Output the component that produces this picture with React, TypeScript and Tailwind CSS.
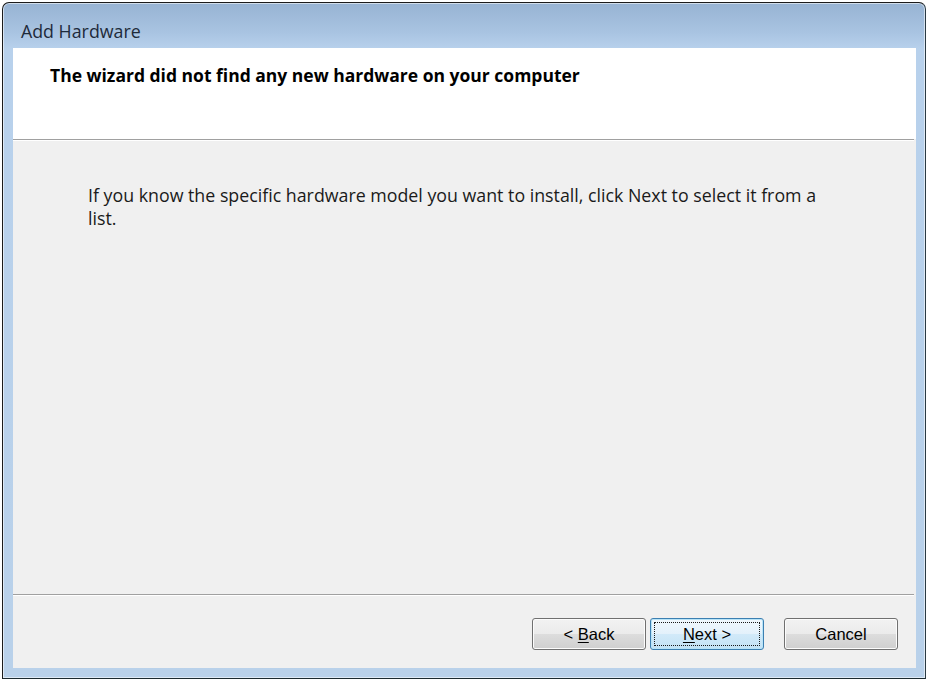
import React from 'react';

const sans = { fontFamily: '"Open Sans", "Noto Sans", sans-serif' };

const WizardButton = ({ children, focused = false }: { children: React.ReactNode; focused?: boolean }) => (
    <button
        className={`relative w-[114px] h-[32px] rounded-[3px] border text-[16.5px] text-black font-['Liberation_Sans',Arial,sans-serif] ${focused
            ? 'border-[#3c7fb1] bg-[linear-gradient(#f1f8fd_0%,#e3f1fb_50%,#d2eaf9_50%,#c3e2f5_100%)] shadow-[inset_0_0_0_1px_#b8e4f8]'
            : 'border-[#707070] bg-[linear-gradient(#f2f2f2_0%,#ebebeb_50%,#dddddd_50%,#cfcfcf_100%)] shadow-[inset_0_0_0_1px_#fcfcfc]'
            }`}
    >
        {focused && <span className="absolute inset-[3px] border border-dotted border-[#1a1a1a]" />}
        <span className="relative">{children}</span>
    </button>
);

const App = () => {
    return (
        <div className="w-[929px] h-[682px] bg-white pt-[2px] pl-[2px] overflow-hidden">
            {/* window */}
            <div className="w-[924px] h-[677px] flex flex-col rounded-t-[7px] border border-[#1b1b1b] border-r-[#2a3a44] border-b-[#1b2a30] bg-[linear-gradient(#97b3d3_0px,#a9c4e2_30px,#b8d1ec_46px,#b9d1ea_100%)] shadow-[inset_0_0_0_1px_rgba(255,255,255,0.55)]">
                {/* title bar */}
                <div className="h-[45px] shrink-0 flex items-center pl-[18px] pt-[12px] text-[17.8px] text-[#1e2a3a]" style={sans}>
                    Add Hardware
                </div>

                {/* client area */}
                <div className="ml-[10px] mr-[9px] mb-[10px] flex-1 flex flex-col bg-[#f0f0f0]">
                    <div className="h-[91px] shrink-0 bg-white pl-[37px] pt-[14px] text-[17.5px] font-bold text-black" style={sans}>
                        The wizard did not find any new hardware on your computer
                    </div>
                    <div className="h-[2px] shrink-0 border-t border-[#a0a0a0] bg-white mr-[2px]" />

                    <div className="flex-1 pl-[75px] pr-[70px] pt-[43px] text-[17.8px] leading-[23px] text-[#1a1a1a]" style={sans}>
                        If you know the specific hardware model you want to install, click Next to select it from a list.
                    </div>

                    <div className="h-[2px] shrink-0 border-t border-[#a0a0a0] bg-white mr-[2px]" />
                    <div className="h-[72px] shrink-0 flex items-start justify-end pt-[22px] pr-[18px]">
                        <div className="flex gap-[4px]">
                            <WizardButton>
                                &lt; <span className="underline underline-offset-2">B</span>ack
                            </WizardButton>
                            <WizardButton focused>
                                <span className="underline underline-offset-2">N</span>ext &gt;
                            </WizardButton>
                        </div>
                        <div className="ml-[20px]">
                            <WizardButton>Cancel</WizardButton>
                        </div>
                    </div>
                </div>
            </div>
        </div>
    );
};

export default App;
